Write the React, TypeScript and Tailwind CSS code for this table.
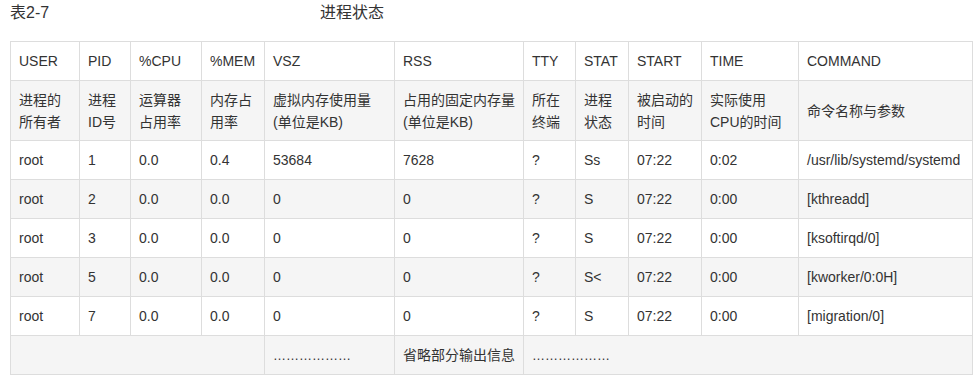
const head = ["USER", "PID", "%CPU", "%MEM", "VSZ", "RSS", "TTY", "STAT", "START", "TIME", "COMMAND"];

const desc: string[][] = [
  ["进程的", "所有者"],
  ["进程", "ID号"],
  ["运算器", "占用率"],
  ["内存占", "用率"],
  ["虚拟内存使用量", "(单位是KB)"],
  ["占用的固定内存量", "(单位是KB)"],
  ["所在", "终端"],
  ["进程", "状态"],
  ["被启动的", "时间"],
  ["实际使用", "CPU的时间"],
  ["命令名称与参数"],
];

const rows = [
  ["root", "1", "0.0", "0.4", "53684", "7628", "?", "Ss", "07:22", "0:02", "/usr/lib/systemd/systemd"],
  ["root", "2", "0.0", "0.0", "0", "0", "?", "S", "07:22", "0:00", "[kthreadd]"],
  ["root", "3", "0.0", "0.0", "0", "0", "?", "S", "07:22", "0:00", "[ksoftirqd/0]"],
  ["root", "5", "0.0", "0.0", "0", "0", "?", "S<", "07:22", "0:00", "[kworker/0:0H]"],
  ["root", "7", "0.0", "0.0", "0", "0", "?", "S", "07:22", "0:00", "[migration/0]"],
];

const widths = [69, 51, 71, 63, 130, 129, 52, 53, 73, 97, 174];

const cell = "border border-[#dddddd] px-2 h-[39px] align-middle text-left font-normal whitespace-nowrap";

export default function App() {
  return (
    <div
      className="bg-white text-[#333333] w-[973px] h-[378px] overflow-hidden"
      style={{ fontFamily: '"Liberation Sans", "Noto Sans CJK SC", sans-serif' }}
    >
      {/* Caption */}
      <div className="flex h-[25px] items-center pl-[10px] text-[16px]">
        <span className="w-[310px]">表2-7</span>
        <span>进程状态</span>
      </div>

      {/* Table */}
      <table className="ml-[10px] mt-[16px] w-[962px] table-fixed border-collapse text-[14px] leading-[22px]">
        <colgroup>
          {widths.map((w, i) => (
            <col key={i} style={{ width: w }} />
          ))}
        </colgroup>
        <thead>
          <tr className="bg-white">
            {head.map((h) => (
              <th key={h} className={cell}>
                {h}
              </th>
            ))}
          </tr>
        </thead>
        <tbody>
          <tr className="bg-[#f5f5f5]">
            {desc.map((lines, i) => (
              <td key={i} className="border border-[#dddddd] px-2 h-[60px] align-middle whitespace-nowrap">
                {lines.map((l) => (
                  <div key={l}>{l}</div>
                ))}
              </td>
            ))}
          </tr>
          {rows.map((r, i) => (
            <tr key={i} className={i % 2 === 0 ? "bg-white" : "bg-[#f5f5f5]"}>
              {r.map((v, j) => (
                <td key={j} className={cell}>
                  {v}
                </td>
              ))}
            </tr>
          ))}
          <tr className="bg-[#f5f5f5]">
            <td colSpan={4} className={cell}></td>
            <td className={cell}>
              <span className="text-[13px]">………………</span>
            </td>
            <td className={cell}>省略部分输出信息</td>
            <td colSpan={5} className={cell}>
              <span className="text-[13px]">………………</span>
            </td>
          </tr>
        </tbody>
      </table>
    </div>
  );
}
